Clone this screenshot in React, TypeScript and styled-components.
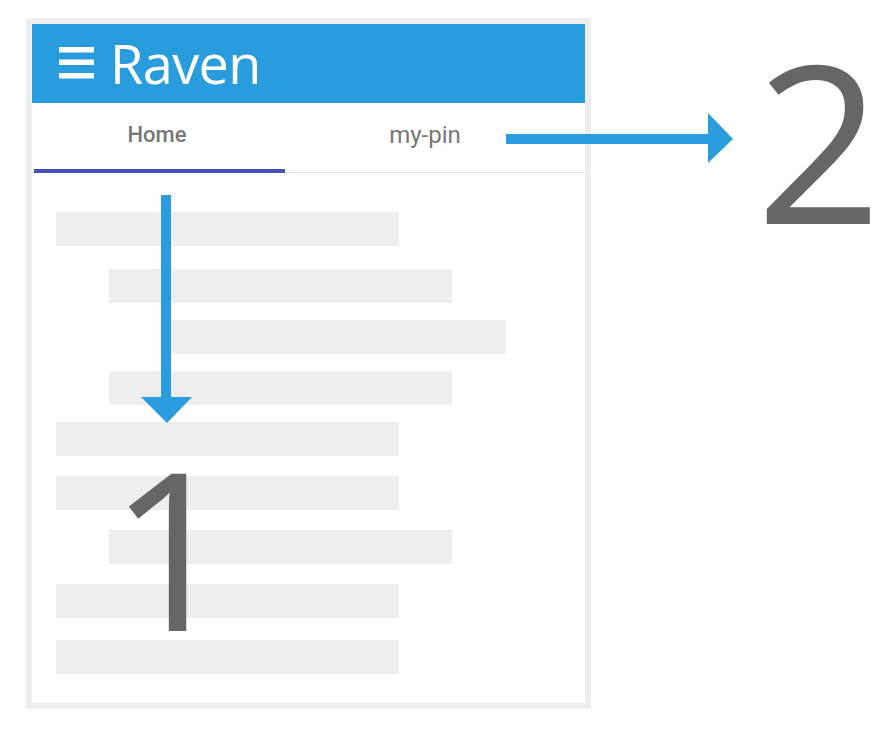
import React from "react";
import styled, { createGlobalStyle } from "styled-components";

const Global = createGlobalStyle`
  html, body { margin: 0; padding: 0; background: #ffffff; }
  body { font-family: "Open Sans", "Liberation Sans", sans-serif; }
`;

const Page = styled.div`
  position: relative;
  width: 890px;
  height: 738px;
  padding: 18px 0 0 26px;
  box-sizing: border-box;
  overflow: hidden;
`;

const Frame = styled.div`
  width: 565px;
  height: 691px;
  box-sizing: border-box;
  border: 6px solid #eeeeee;
  display: flex;
  flex-direction: column;
  background: #ffffff;
`;

const AppBar = styled.header`
  height: 79px;
  flex: 0 0 79px;
  background: #289cdd;
  display: flex;
  align-items: center;
  padding-left: 27px;
  gap: 16px;
  color: #ffffff;
`;

const Title = styled.span`
  font-family: "Open Sans", "Liberation Sans", sans-serif;
  font-size: 54px;
  line-height: 1;
  margin-bottom: 2px;
  letter-spacing: -0.6px;
`;

const TabBar = styled.nav`
  height: 70px;
  flex: 0 0 70px;
  box-sizing: border-box;
  padding-left: 2px;
  display: grid;
  grid-template-columns: 251px 280px 1fr;
  border-bottom: 1px solid #e3e3e3;
`;

const Tab = styled.div<{ $active?: boolean }>`
  position: relative;
  display: flex;
  align-items: center;
  justify-content: center;
  padding-bottom: 6px;
  padding-right: ${(p) => (p.$active ? 5 : 0)}px;
  font-family: Roboto, "Liberation Sans", sans-serif;
  font-size: ${(p) => (p.$active ? 22 : 24)}px;
  font-weight: ${(p) => (p.$active ? 500 : 400)};
  color: #777777;
  ${(p) =>
    p.$active &&
    `&::after {
      content: "";
      position: absolute;
      left: 0;
      right: 0;
      bottom: -1px;
      height: 4px;
      background: #4650b6;
    }`}
`;

const Content = styled.div`
  display: flex;
  flex-direction: column;
  align-items: flex-start;
  padding-top: 39px;
`;

const Bar = styled.div<{ $indent: number; $width: number; $gap: number }>`
  height: 34px;
  width: ${(p) => p.$width}px;
  margin-left: ${(p) => p.$indent}px;
  margin-top: ${(p) => p.$gap}px;
  background: #eeeeee;
`;

const Digit = styled.span<{ $left: number; $top: number }>`
  position: absolute;
  left: ${(p) => p.$left}px;
  top: ${(p) => p.$top}px;
  font-family: "Open Sans", "Liberation Sans", sans-serif;
  font-size: 220px;
  line-height: 1;
  color: #666666;
`;

const Arrow = styled.svg<{ $left: number; $top: number }>`
  position: absolute;
  left: ${(p) => p.$left}px;
  top: ${(p) => p.$top}px;
`;

const bars = [
  { indent: 24, width: 343, gap: 0 },
  { indent: 77, width: 343, gap: 23 },
  { indent: 139, width: 335, gap: 17 },
  { indent: 77, width: 343, gap: 17 },
  { indent: 24, width: 343, gap: 17 },
  { indent: 24, width: 343, gap: 20 },
  { indent: 77, width: 343, gap: 20 },
  { indent: 24, width: 343, gap: 20 },
  { indent: 24, width: 343, gap: 22 },
];

function Hamburger() {
  return (
    <svg width="35" height="33" viewBox="0 0 35 33" aria-hidden>
      <rect x="0" y="0" width="35" height="5.5" fill="#fff" />
      <rect x="0" y="12.5" width="35" height="5.5" fill="#fff" />
      <rect x="0" y="26" width="35" height="5.5" fill="#fff" />
    </svg>
  );
}

export default function App() {
  return (
    <>
      <Global />
      <Page>
        <Frame>
          <AppBar>
            <Hamburger />
            <Title>Raven</Title>
          </AppBar>
          <TabBar>
            <Tab $active>Home</Tab>
            <Tab>my-pin</Tab>
          </TabBar>
          <Content>
            {bars.map((b, i) => (
              <Bar key={i} $indent={b.indent} $width={b.width} $gap={b.gap} />
            ))}
          </Content>
        </Frame>

        <Arrow $left={141} $top={195} width="51" height="228" viewBox="0 0 51 228">
          <rect x="20" y="0" width="10" height="203" fill="#299ddd" />
          <polygon points="0,202 51,202 26,228" fill="#299ddd" />
        </Arrow>
        <Arrow $left={506} $top={113} width="227" height="50" viewBox="0 0 227 50">
          <rect x="0" y="21" width="203" height="10" fill="#299ddd" />
          <polygon points="202,0 227,26 202,50" fill="#299ddd" />
        </Arrow>

        <Digit $left={109} $top={436}>1</Digit>
        <Digit $left={756} $top={29}>2</Digit>
      </Page>
    </>
  );
}
